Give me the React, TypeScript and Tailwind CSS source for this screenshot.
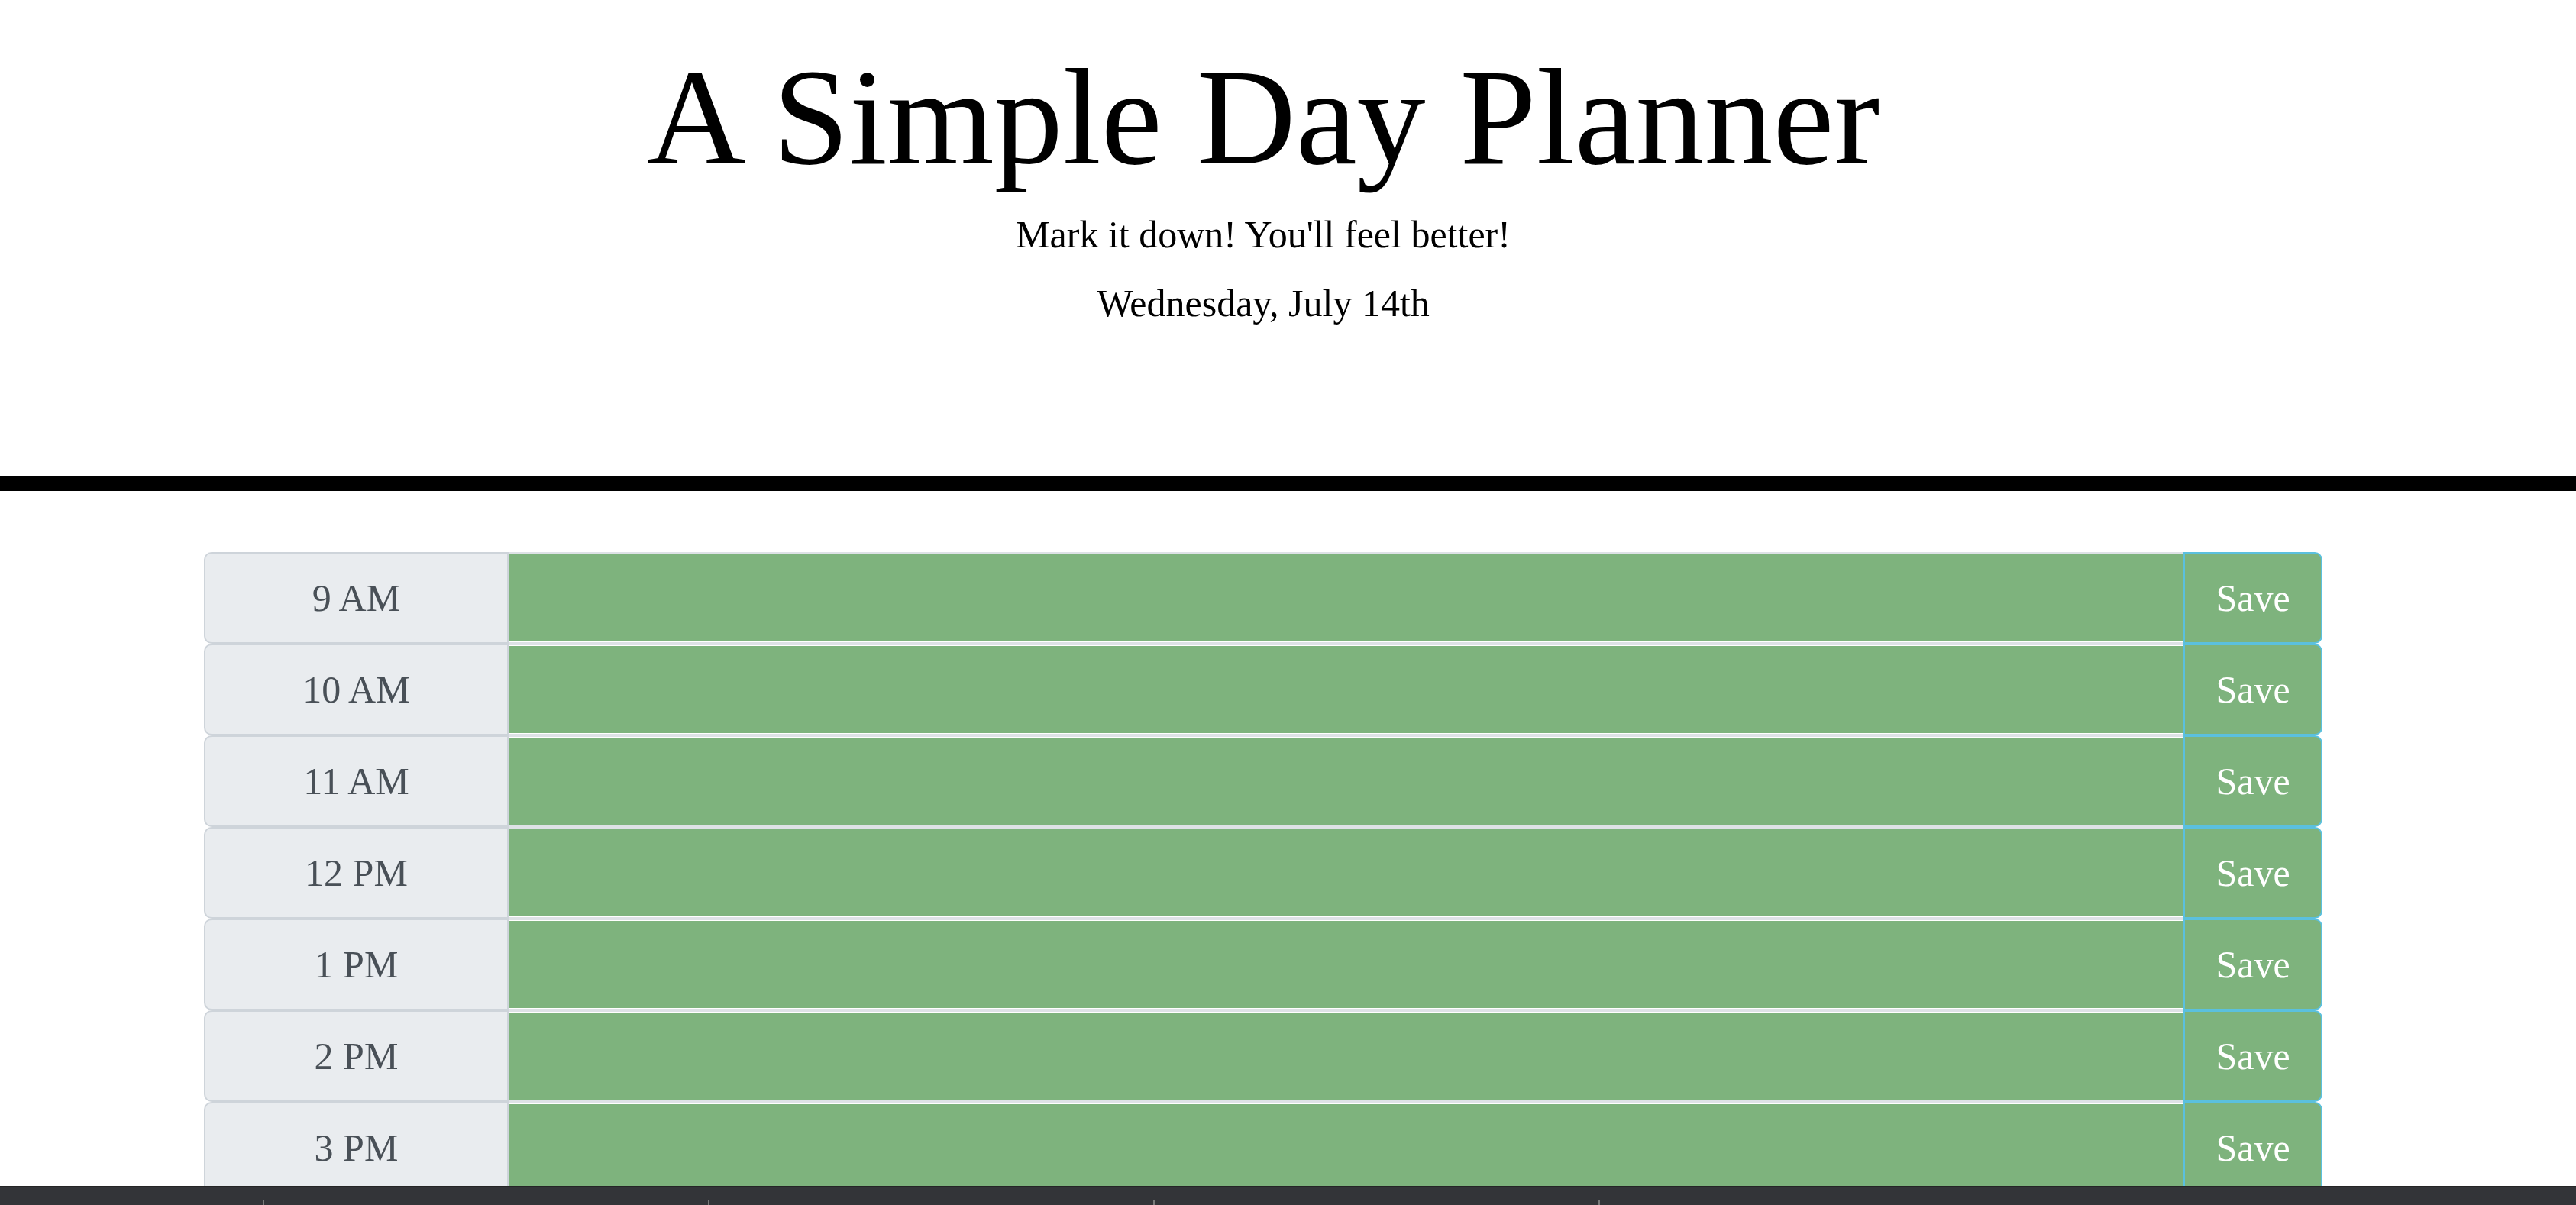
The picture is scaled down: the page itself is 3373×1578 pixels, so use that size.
import React from "react";

const hours = ["9 AM", "10 AM", "11 AM", "12 PM", "1 PM", "2 PM", "3 PM"];

function Row({ label }: { label: string }) {
  return (
    <div className="flex h-[120px] w-[2774px]">
      <div className="flex w-[400px] shrink-0 items-center justify-center rounded-l-[10px] border-2 border-r-[3px] border-[#ced4da] bg-[#e9ecef] text-[50px] text-[#495057]">
        {label}
      </div>
      <textarea
        className="h-full flex-1 resize-none border-y-2 border-[#dee2e6] bg-[#7eb37d] shadow-[inset_0_1px_0_#ffffff,inset_0_-1px_0_#ffffff] outline-none"
        defaultValue=""
      />
      <button className="flex h-full w-[182px] shrink-0 items-center justify-center rounded-r-[10px] border-2 border-[#5bc0de] bg-[#7eb37d] text-[50px] text-white">
        Save
      </button>
    </div>
  );
}

export default function App() {
  return (
    <div
      className="relative h-[1578px] w-full overflow-hidden bg-white"
      style={{ fontFamily: '"Liberation Serif", "Times New Roman", serif' }}
    >
      <header className="w-[3308px] pt-[46px] text-center text-black">
        <h1 className="text-[180px] leading-[216px]">A Simple Day Planner</h1>
        <p className="mt-[8px] text-[50px] leading-[75px]">Mark it down! You'll feel better!</p>
        <p className="mt-[15px] text-[50px] leading-[75px]">Wednesday, July 14th</p>
      </header>
      <div className="mt-[188px] h-[20px] w-full bg-black" />
      <div className="mt-[80px] ml-[267px] flex flex-col">
        {hours.map((h) => (
          <Row key={h} label={h} />
        ))}
      </div>
      <div className="fixed bottom-0 left-0 right-0 flex h-[25px] items-end border-t-2 border-[#252526] bg-[#333438]">
        <div className="ml-[344px] h-[7px] w-[2px] bg-[#7a7a7a]" />
        <div className="ml-[581px] h-[7px] w-[2px] bg-[#7a7a7a]" />
        <div className="ml-[581px] h-[7px] w-[2px] bg-[#7a7a7a]" />
        <div className="ml-[581px] h-[7px] w-[2px] bg-[#7a7a7a]" />
      </div>
    </div>
  );
}
